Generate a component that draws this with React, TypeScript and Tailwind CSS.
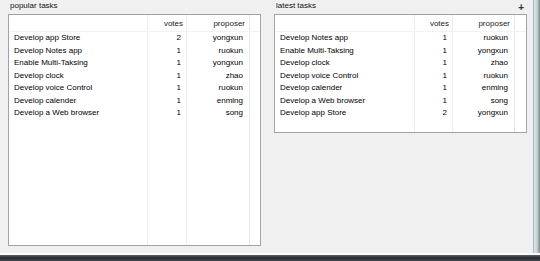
import React from "react";

type Task = { name: string; votes: number; proposer: string };

const popular: Task[] = [
  { name: "Develop app Store", votes: 2, proposer: "yongxun" },
  { name: "Develop Notes app", votes: 1, proposer: "ruokun" },
  { name: "Enable Multi-Taksing", votes: 1, proposer: "yongxun" },
  { name: "Develop clock", votes: 1, proposer: "zhao" },
  { name: "Develop voice Control", votes: 1, proposer: "ruokun" },
  { name: "Develop calender", votes: 1, proposer: "enming" },
  { name: "Develop a Web browser", votes: 1, proposer: "song" },
];

const latest: Task[] = [
  { name: "Develop Notes app", votes: 1, proposer: "ruokun" },
  { name: "Enable Multi-Taksing", votes: 1, proposer: "yongxun" },
  { name: "Develop clock", votes: 1, proposer: "zhao" },
  { name: "Develop voice Control", votes: 1, proposer: "ruokun" },
  { name: "Develop calender", votes: 1, proposer: "enming" },
  { name: "Develop a Web browser", votes: 1, proposer: "song" },
  { name: "Develop app Store", votes: 2, proposer: "yongxun" },
];

function TaskList({ tasks, cols }: { tasks: Task[]; cols: string }) {
  return (
    <div className="relative h-full bg-white">
      {/* column grid lines */}
      <div className={`absolute inset-0 grid ${cols}`}>
        <div className="border-r border-[#ededed]" />
        <div className="border-r border-[#ededed]" />
        <div className="border-r border-[#e6e6e6]" />
        <div />
      </div>

      <div className="relative">
        <div className={`grid h-[17px] items-center border-b border-[#f2f2f2] pt-[1px] text-[#222] ${cols}`}>
          <div />
          <div className="pr-[4px] text-right">votes</div>
          <div className="pr-[5px] text-right">proposer</div>
          <div />
        </div>
        <div>
          {tasks.map((t) => (
            <div key={t.name} className={`grid h-[12.5px] items-center text-black ${cols}`}>
              <div className="pl-[5px]">{t.name}</div>
              <div className="pr-[6px] text-right">{t.votes}</div>
              <div className="pr-[7px] text-right">{t.proposer}</div>
              <div />
            </div>
          ))}
        </div>
      </div>
    </div>
  );
}

function Panel({
  title,
  tasks,
  cols,
  boxHeight,
  action,
}: {
  title: string;
  tasks: Task[];
  cols: string;
  boxHeight: string;
  action?: React.ReactNode;
}) {
  return (
    <div className="flex w-[253px] flex-col">
      <div className="flex h-[14px] items-start justify-between pl-[2px] pr-[3px] pt-[2px] text-[#111]">
        <span>{title}</span>
        {action}
      </div>
      <div className={`${boxHeight} border border-[#a3a3a3] shadow-[inset_0_0_0_1px_#f4f4f4]`}>
        <TaskList tasks={tasks} cols={cols} />
      </div>
    </div>
  );
}

export default function App() {
  return (
    <div
      className="relative flex h-[261px] w-[540px] flex-col overflow-hidden bg-[#f0f0f0] text-[8px] leading-none"
      style={{ fontFamily: '"Liberation Sans", Arial, sans-serif' }}
    >
      <div className="flex h-[253px] w-[533px] gap-[13px] pl-[8px]">
        <Panel
          title="popular tasks"
          tasks={popular}
          cols="grid-cols-[139px_39px_63px_1fr]"
          boxHeight="h-[232px]"
        />
        <Panel
          title="latest tasks"
          tasks={latest}
          cols="grid-cols-[140px_38px_62px_1fr]"
          boxHeight="h-[119px]"
          action={<span className="mt-[1px] text-[10px] font-bold leading-none text-[#333]">+</span>}
        />
      </div>

      {/* window frame edges */}
      <div className="absolute right-0 top-0 h-[253px] w-[7px] border-l border-[#a9b6cc] bg-gradient-to-r from-[#dfe5ee] via-[#c9d2dc] to-[#7d8a86]" />
      <div className="h-[2px] bg-[#fbfbfb]" />
      <div className="h-[6px] bg-gradient-to-b from-[#5d6168] via-[#25292f] to-[#45494f]" />
    </div>
  );
}
